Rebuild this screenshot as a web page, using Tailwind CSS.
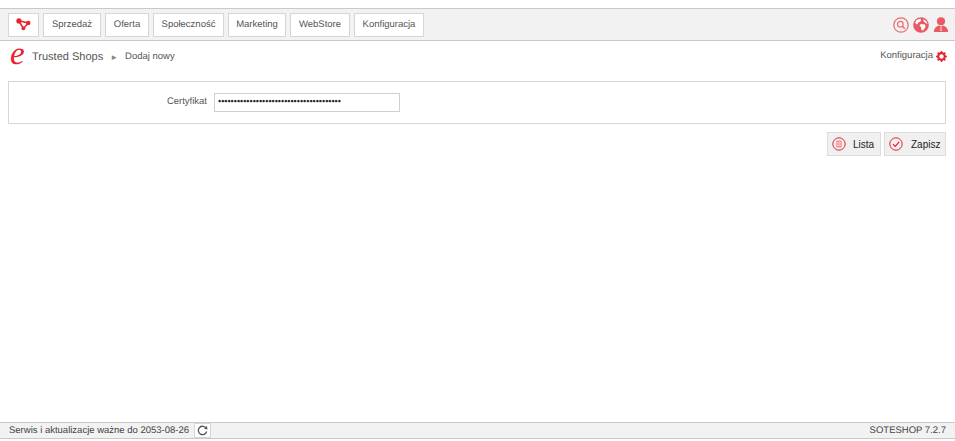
<!DOCTYPE html>
<html lang="pl">
<head>
    <meta charset="UTF-8">
    <title>Trusted Shops - Dodaj nowy</title>
    <script src="https://cdn.jsdelivr.net/npm/@tailwindcss/browser@4"></script>
</head>
<body class="bg-white h-[441px] overflow-hidden flex flex-col font-['Liberation_Sans',Arial,sans-serif] text-[9.5px] text-[#555] [text-rendering:geometricPrecision]">
    <!-- Top menu -->
    <nav class="mt-2 h-[33px] shrink-0 bg-[#f2f2f2] border-y border-[#c9c9c9] flex items-center pl-2 pr-[6px]">
        <div class="flex gap-1">
            <a class="w-[31px] h-[24px] bg-white border border-[#d6d6d6] flex items-center justify-center">
                <svg width="15" height="13" viewBox="0 0 15 13"><path d="M2.8 2.8 L12.4 5 L7.4 10.4 Z" fill="none" stroke="#e8222e" stroke-width="1.5"/><circle cx="2.9" cy="2.9" r="2.6" fill="#e8222e"/><circle cx="12.3" cy="4.9" r="2.2" fill="#e8222e"/><circle cx="7.4" cy="10.3" r="1.9" fill="#e8222e"/></svg>
            </a>
            <a class="w-[58px] h-[24px] pt-px bg-white border border-[#d6d6d6] flex items-center justify-center">Sprzedaż</a>
            <a class="w-[44px] h-[24px] pt-px bg-white border border-[#d6d6d6] flex items-center justify-center">Oferta</a>
            <a class="w-[71px] h-[24px] pt-px bg-white border border-[#d6d6d6] flex items-center justify-center">Społeczność</a>
            <a class="w-[58px] h-[24px] pt-px bg-white border border-[#d6d6d6] flex items-center justify-center">Marketing</a>
            <a class="w-[60px] h-[24px] pt-px bg-white border border-[#d6d6d6] flex items-center justify-center">WebStore</a>
            <a class="w-[70px] h-[24px] pt-px bg-white border border-[#d6d6d6] flex items-center justify-center">Konfiguracja</a>
        </div>
        <div class="ml-auto flex items-center gap-[4px]">
            <svg width="16" height="16" viewBox="0 0 16 16" fill="none" stroke="#ea6a70"><circle cx="8" cy="8" r="7.2" stroke-width="1.2"/><circle cx="7.3" cy="7.2" r="2.8" stroke-width="1.2"/><path d="M9.4 9.3 L11.8 11.7" stroke-width="1.6"/></svg>
            <svg width="16" height="16" viewBox="0 0 16 16"><circle cx="8" cy="8" r="7.8" fill="#ea5a62"/><path d="M3.5 3 L7.5 1.5 L8 4 L5.5 5.5 L4 7.5 L2 6 Z M8 7 L12 7.5 L12.5 10 L10 13.5 L8.5 13 L8 10 L6.5 8.5 Z M10.5 2 L13.5 4.5 L14.5 7 L12.5 6 L10.5 4 Z" fill="#fff"/></svg>
            <svg width="16" height="17" viewBox="0 0 17 17"><circle cx="8.5" cy="5" r="4.3" fill="#ea5a62"/><path d="M1 16.5 C1 12 4 10 6.5 9.5 L8.5 11 L10.5 9.5 C13 10 16 12 16 16.5 Z" fill="#ea5a62"/><path d="M8.5 11.5 L8.5 15.5" stroke="#fff" stroke-width="1"/></svg>
        </div>
    </nav>

    <!-- Breadcrumb -->
    <div class="h-[31px] shrink-0 flex items-center pl-[10px] pr-2">
        <span class="font-['Liberation_Serif',serif] italic text-[33px] leading-none text-[#e8222e] w-[22px] -mt-[5px]">e</span>
        <span class="text-[11px] text-[#555] mt-[2px]">Trusted Shops</span>
        <span class="ml-[7px] mr-[7px] text-[8px] text-[#888] mt-[2px]">►</span>
        <span class="text-[#555] mt-[2px]">Dodaj nowy</span>
        <span class="ml-auto text-[#555]">Konfiguracja</span>
        <svg width="11" height="11" viewBox="0 0 11 11" class="ml-[3px] -mt-[1px]"><circle cx="5.5" cy="5.5" r="3.3" fill="none" stroke="#e8222e" stroke-width="2.2"/><path d="M5.5 0 V11 M0 5.5 H11 M1.6 1.6 L9.4 9.4 M9.4 1.6 L1.6 9.4" stroke="#e8222e" stroke-width="1.5" stroke-dasharray="2 7 2 0"/></svg>
    </div>

    <!-- Form -->
    <main class="grow pl-2 pr-[9px] pt-[9px]">
        <div class="h-[43px] border border-[#d6d6d6] flex items-center">
            <label class="w-[198px] text-right text-[#555] -mt-px">Certyfikat</label>
            <div class="ml-[7px] w-[186px] h-[19px] border border-[#cfcfcf] pl-[3px] pb-[2px] flex items-center text-[#222] text-[9px] overflow-hidden">•••••••••••••••••••••••••••••••••••••••</div>
        </div>
        <div class="flex justify-end gap-[3px] mt-2">
            <button class="w-[54px] h-[24px] bg-[#f0f0f0] border border-[#ddd] flex items-center pl-[4px] text-[10px] text-[#222]">
                <svg width="14" height="14" viewBox="0 0 14 14" fill="none"><circle cx="7" cy="7" r="6.2" stroke="#e8222e" stroke-width="1"/><rect x="4.3" y="3.6" width="5.4" height="6.8" rx="0.5" fill="#ee8a8e"/><path d="M5 5.3 H9 M5 7 H9 M5 8.7 H9" stroke="#fff" stroke-width=".6"/></svg>
                <span class="ml-[7px]">Lista</span>
            </button>
            <button class="w-[62px] h-[24px] bg-[#f0f0f0] border border-[#ddd] flex items-center pl-[4px] text-[10px] text-[#222]">
                <svg width="14" height="14" viewBox="0 0 14 14" fill="none" stroke="#e8222e"><circle cx="7" cy="7" r="6.2" stroke-width="1"/><path d="M4 7.2 L6.2 9.4 L10.2 4.8" stroke-width="1.2"/></svg>
                <span class="ml-[8px]">Zapisz</span>
            </button>
        </div>
    </main>

    <!-- Status bar -->
    <footer class="h-[17px] mb-[2px] shrink-0 bg-[#f2f2f2] border-y border-[#c9c9c9] flex items-center pl-[9px] pr-[9px] text-[#444]">
        <span class="mt-px">Serwis i aktualizacje ważne do 2053-08-26</span>
        <span class="ml-[5px] w-[17px] h-[15px] bg-white border border-[#d6d6d6] flex items-center justify-center">
            <svg width="11" height="11" viewBox="0 0 11 11" fill="none"><path d="M9.2 3.4 A4.2 4.2 0 1 0 9.6 6.5" stroke="#555" stroke-width="1.3"/><path d="M7 3.8 L10.4 4.4 L10 1 Z" fill="#555"/></svg>
        </span>
        <span class="ml-auto mt-px">SOTESHOP 7.2.7</span>
    </footer>
</body>
</html>
